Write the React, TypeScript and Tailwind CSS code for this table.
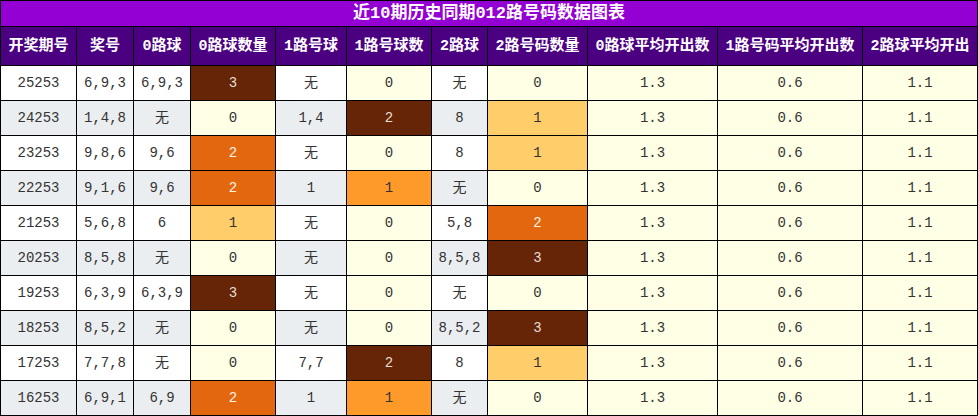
import React from "react";

type Cell = { t: string; bg?: string; fg?: string };

const WHITE = "bg-white";
const GRAY = "bg-[#ebeef1]";
const PALE = "bg-[#ffffe5]";
const BROWN = "bg-[#662506]";
const ORANGE = "bg-[#e2670f]";
const LIGHT = "bg-[#ffcd69]";
const MID = "bg-[#fe9a2a]";

const headers = [
  "开奖期号",
  "奖号",
  "0路球",
  "0路球数量",
  "1路号球",
  "1路号球数",
  "2路球",
  "2路号码数量",
  "0路球平均开出数",
  "1路号码平均开出数",
  "2路球平均开出",
];

type Row = [string, string, string, number, string, number, string, number];

const rows: Row[] = [
  ["25253", "6,9,3", "6,9,3", 3, "无", 0, "无", 0],
  ["24253", "1,4,8", "无", 0, "1,4", 2, "8", 1],
  ["23253", "9,8,6", "9,6", 2, "无", 0, "8", 1],
  ["22253", "9,1,6", "9,6", 2, "1", 1, "无", 0],
  ["21253", "5,6,8", "6", 1, "无", 0, "5,8", 2],
  ["20253", "8,5,8", "无", 0, "无", 0, "8,5,8", 3],
  ["19253", "6,3,9", "6,3,9", 3, "无", 0, "无", 0],
  ["18253", "8,5,2", "无", 0, "无", 0, "8,5,2", 3],
  ["17253", "7,7,8", "无", 0, "7,7", 2, "8", 1],
  ["16253", "6,9,1", "6,9", 2, "1", 1, "无", 0],
];

function countCell(n: number, scale: "0" | "1" | "2"): Cell {
  if (n === 0) return { t: "0", bg: PALE, fg: "text-[#333]" };
  if (scale === "1") {
    if (n === 1) return { t: "1", bg: MID, fg: "text-[#333]" };
    return { t: String(n), bg: BROWN, fg: "text-[#e6ddd6]" };
  }
  if (n === 1) return { t: "1", bg: LIGHT, fg: "text-[#333]" };
  if (n === 2) return { t: "2", bg: ORANGE, fg: "text-[#fff3e6]" };
  return { t: String(n), bg: BROWN, fg: "text-[#e6ddd6]" };
}

export default function App() {
  const font = {
    fontFamily:
      '"Liberation Mono", "Noto Sans CJK SC", monospace',
  };
  return (
    <div className="w-[978px] h-[416px] bg-white" style={font}>
      <div className="grid w-[978px] bg-black gap-px p-px grid-cols-[75px_56px_56px_84px_70px_84px_55px_99px_129px_144px_114px] grid-rows-[25px_38px_repeat(10,34px)]">
        <div className="col-span-11 bg-[#9400d3] text-white font-bold text-[17px] flex items-center justify-center leading-none">
          近10期历史同期012路号码数据图表
        </div>
        {headers.map((h) => (
          <div
            key={h}
            className="bg-[#4b0082] text-white font-bold text-[15px] flex items-center justify-center whitespace-nowrap overflow-hidden leading-none"
          >
            {h}
          </div>
        ))}
        {rows.map((r, i) => {
          const base = i % 2 === 0 ? WHITE : GRAY;
          const cells: Cell[] = [
            { t: r[0], bg: base },
            { t: r[1], bg: base },
            { t: r[2], bg: base },
            countCell(r[3], "0"),
            { t: r[4], bg: base },
            countCell(r[5], "1"),
            { t: r[6], bg: base },
            countCell(r[7], "2"),
            { t: "1.3", bg: PALE },
            { t: "0.6", bg: PALE },
            { t: "1.1", bg: PALE },
          ];
          return cells.map((c, j) => (
            <div
              key={`${i}-${j}`}
              className={`${c.bg} ${c.fg ?? "text-[#333]"} text-[14px] flex items-center justify-center leading-none whitespace-nowrap`}
            >
              {c.t}
            </div>
          ));
        })}
      </div>
    </div>
  );
}
